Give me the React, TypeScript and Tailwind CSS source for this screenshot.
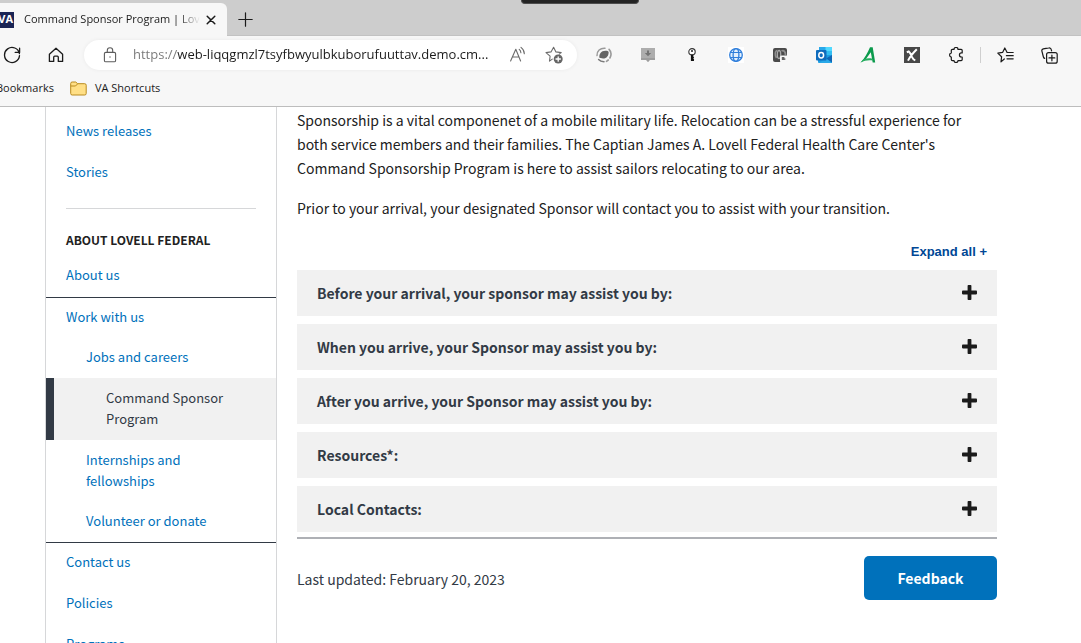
import React, { useState } from "react";

const chromeFont = "font-['Open_Sans','Noto_Sans',sans-serif]";
const line = { fill: "none", stroke: "currentColor", strokeLinecap: "round", strokeLinejoin: "round" } as const;

function IconButton({ label, children }: { label: string; children: React.ReactNode }) {
  return (
    <button type="button" aria-label={label} className="flex h-8 w-11 shrink-0 items-center justify-center text-[#1b1b1b]">
      {children}
    </button>
  );
}

function RefreshIcon() {
  return (
    <svg width="18" height="18" viewBox="0 0 18 18" {...line} strokeWidth="1.3">
      <path d="M16.4 7.6A7.5 7.5 0 1 0 16.5 9.6M16.6 2.2V6.4H12.2" />
    </svg>
  );
}

function HomeIcon() {
  return (
    <svg width="16" height="16" viewBox="0 0 16 16" {...line} strokeWidth="1.3">
      <path d="M1.4 7.2 8 1.2l6.6 6v7.2h-4.3v-4.2a1 1 0 0 0-1-1H6.7a1 1 0 0 0-1 1v4.2H1.4z" />
    </svg>
  );
}

function LockIcon() {
  return (
    <svg width="16" height="16" viewBox="0 0 16 16" {...line} strokeWidth="1.1" className="shrink-0 text-[#5c5c5c]">
      <rect x="2.4" y="5.4" width="11.2" height="9.4" rx="1.4" />
      <path d="M5.3 5.2V3.4a2.7 2.7 0 0 1 5.4 0v1.8" />
      <circle cx="8" cy="10" r=".7" fill="currentColor" stroke="none" />
    </svg>
  );
}

function ReadAloudIcon() {
  return (
    <svg width="18" height="18" viewBox="0 0 18 18" {...line} strokeWidth="1.1">
      <path d="M1.6 15 6.8 3.2 11.6 15M3.4 11h6.6M10.2 3.4c1 .8 1.6 1.9 1.7 3.3M12 1.4c1.9 1.4 3.3 3.3 3.3 6.3" />
    </svg>
  );
}

function AddFavoriteIcon() {
  return (
    <svg width="18" height="18" viewBox="0 0 18 18" {...line} strokeWidth="1.1">
      <path d="M7.3 13.1 4.5 15.1 5.1 10.2 1 6.6 6 5.9 8.6 1.3 10.9 5.9 16.2 6.6 14.3 8.2" />
      <circle cx="13.2" cy="13" r="4.5" fill="#666" stroke="none" />
      <path d="M13.2 10.8v4.4M11 13h4.4" stroke="#fff" strokeWidth="1.3" />
    </svg>
  );
}

const extensions = [
  {
    name: "Swirl",
    icon: (
      <svg width="16" height="16" viewBox="0 0 16 16">
        <path d="M3.4 10.8C2.8 7 5 3.800 9.500 3.700c1.700 0 2.900.5 3.100 1.200.2 3.700-1.900 6.300-5.500 6.700z" fill="#666" />
        <path d="M1 8.600C.8 4 4.200.9 9 1.200" {...line} stroke="#9a9a9a" strokeWidth="1.500" />
        <path d="M2.600 12.600c1.200 1.400 3 2.200 5.400 2.200" {...line} stroke="#7a7a7a" strokeWidth="1.500" />
        <path d="M13.100 2.400c2.300 2.400 2.400 5.600.8 8.600M12.300 13l-1.800 1.300" {...line} stroke="#9a9a9a" strokeWidth="1.600" />
      </svg>
    ),
  },
  {
    name: "Download helper",
    icon: (
      <svg width="16" height="16" viewBox="0 0 16 16">
        <path d="M1 1h14v12h-5.200L8 15l-1.800-2H1z" fill="#adadad" />
        <path d="M7 3.500h2V6h2.200L8 9.300 4.800 6H7z" fill="#737373" />
        <path d="M1 11h14v2h-5.200L8 15l-1.800-2H1z" fill="#9d9d9d" />
      </svg>
    ),
  },
  {
    name: "Password key",
    icon: (
      <svg width="16" height="16" viewBox="0 0 16 16">
        <circle cx="8" cy="4.800" r="3.200" fill="#fff" stroke="#333" strokeWidth="1.100" />
        <circle cx="8" cy="4" r="1" fill="#222" />
        <path d="M6.900 7.500h2.400v2.100l.8.800-.8 1 .8 1-.2 1.600H6.900z" fill="#111" />
      </svg>
    ),
  },
  {
    name: "Web tools",
    icon: (
      <svg width="16" height="16" viewBox="0 0 16 16" fill="none" stroke="#2f7edb" strokeWidth="1.300">
        <path d="M0 0h16v16H0z" fill="#fff" stroke="none" />
        <circle cx="8" cy="8" r="6.300" fill="#e4f0fc" />
        <ellipse cx="8" cy="8" rx="2.900" ry="6.300" />
        <path d="M2.300 5.500h11.400M2.300 10.500h11.400" strokeWidth="1.200" />
      </svg>
    ),
  },
  {
    name: "Recorder",
    icon: (
      <svg width="16" height="16" viewBox="0 0 16 16">
        <rect x="1" y="1" width="14" height="14" rx="2" fill="#4a4a4a" />
        <path d="M5.500 3.500C3 3.800 2.500 8 4.500 11" fill="none" stroke="#8e8e8e" strokeWidth="1.600" />
        <ellipse cx="7" cy="7.500" rx="1.700" ry="4" fill="none" stroke="#a8a8a8" strokeWidth="1.300" />
        <path d="M9.500 4c2.500-1.200 4 1 4 4" fill="none" stroke="#8e8e8e" strokeWidth="1.800" />
        <path d="M9.500 8.500h5.500l.5 3v3l-1.500 1H9.500a1.500 1.500 0 0 1-1.500-1.500v-4a1.500 1.500 0 0 1 1.500-1.500z" fill="#f7f7f7" />
        <path d="M9.800 10h2.600v1.200l1.600.7-1.600 1.100H9.800z" fill="#626262" />
      </svg>
    ),
  },
  {
    name: "Outlook",
    icon: (
      <svg width="16" height="16" viewBox="0 0 16 16">
        <path d="M3 0h13v8H3z" fill="#28a8ea" />
        <path d="M9.500 0H16v4H9.500z" fill="#50d9ff" />
        <path d="M9.500 4H16v4H9.500z" fill="#32bdf2" />
        <path d="M2 8h14v8H3a1 1 0 0 1-1-1z" fill="#1b9de2" />
        <path d="M16 8v7.500L10 11.500z" fill="#1066b5" />
        <path d="M3 16h13l-6-4.500z" fill="#2aa9e8" />
        <rect x="0" y="3" width="10.500" height="10.500" rx="1" fill="#0f6cbd" />
        <ellipse cx="5.200" cy="8.200" rx="2.400" ry="2.700" fill="none" stroke="#fff" strokeWidth="1.500" />
      </svg>
    ),
  },
  {
    name: "Accessibility checker",
    icon: (
      <svg width="16" height="16" viewBox="0 0 16 16">
        <path d="M10 .3h2.700L15.200 15.600h-2.500L10.800 5.200 5.200 13 .6 15.600C4.600 11.300 7.500 6.200 10 .3z" fill="#0b9a4c" />
        <path d="M.6 15.600 3.400 12.200c3-1 6.300-1.300 9-.5l.4 1.900C8.500 12.800 4.600 13.600.6 15.600z" fill="#25ad5f" />
      </svg>
    ),
  },
  {
    name: "XPath inspector",
    icon: (
      <svg width="16" height="16" viewBox="0 0 16 16">
        <path d="M0 0h16v16H0z" fill="#484848" />
        <path d="M2.800 5.200 4.800 4.500c1.700 1.400 2.400 3.500 3.100 5.400.8 1.800 1.600 2.900 3.400 3.500M12.800 2.200C9 6 6.200 9.200 4 13.600" fill="none" stroke="#fff" strokeWidth="2" />
      </svg>
    ),
  },
  {
    name: "Extensions",
    icon: (
      <svg width="16" height="16" viewBox="0 0 16 16" {...line} strokeWidth="1.200">
        <path d="M6 2.400a2 2 0 0 1 4 0h3.200a1 1 0 0 1 1 1v2.500h-.7a2 2 0 0 0 0 4.100h.7v2.600a1 1 0 0 1-1 1H10a2 2 0 0 1-4 0H4.300a1 1 0 0 1-1-1V10.200a2.200 2.200 0 0 1 0-4.300V3.400a1 1 0 0 1 1-1z" />
      </svg>
    ),
  },
];

function FavoritesIcon() {
  return (
    <svg width="17" height="16" viewBox="0 0 17 16" {...line} strokeWidth="1.200">
      <path d="M7.300 12 4 14.900 4.600 9.800.8 6.100 5.600 5.400 7.800 1 10 5.300M10 5.500h6.200M9.400 8.700h6.800M10 11.800h6.200" />
    </svg>
  );
}

function CollectionsIcon() {
  return (
    <svg width="17" height="17" viewBox="0 0 17 17" {...line} strokeWidth="1.200">
      <path d="M3.700 11.400A2 2 0 0 1 2.400 10L.9 4.200a2 2 0 0 1 1.400-2.400L7.800.9a2 2 0 0 1 2.400 1.500l.4 1.500" />
      <rect x="5.600" y="5.600" width="10.600" height="10.600" rx="2" />
      <path d="M10.900 8v5.800M8 10.900h5.800" />
    </svg>
  );
}

function FolderIcon() {
  return (
    <svg width="17" height="15" viewBox="0 0 17 15" stroke="#b98a1e" strokeWidth="1">
      <path d="M.7 2.500A1.500 1.500 0 0 1 2.200 1h3.500l2 1.700h7a1.500 1.500 0 0 1 1.500 1.500v8.300a1.500 1.500 0 0 1-1.500 1.500H2.200a1.500 1.500 0 0 1-1.500-1.500z" fill="#ffdf86" />
      <path d="M.8 5h4.700l2.200-2.200" fill="none" />
    </svg>
  );
}

function BrowserBar() {
  return (
    <header className={`shrink-0 overflow-hidden border-b border-[#bdbdbd] bg-[#f7f7f7] text-[#1b1b1b] ${chromeFont}`}>
      <div className="relative flex h-9 items-end border-b border-[#c2c2c2] bg-[#cdcdcd]">
        <div className="-mb-px flex h-[33px] w-[227px] items-center rounded-tr-md bg-[#f7f7f7]">
          <span className="-ml-1 flex h-4 w-[18px] shrink-0 items-center justify-end bg-[#1a2454] pr-px text-[11px] font-bold text-white">VA</span>
          <span className="ml-2.5 w-[176px] bg-linear-to-r from-[#1b1b1b] from-[155px] to-transparent bg-clip-text text-[11px] whitespace-nowrap text-transparent">
            Command Sponsor Program | Lov
          </span>
          <button type="button" aria-label="Close tab" className="ml-1.5 shrink-0">
            <svg width="10" height="10" viewBox="0 0 10 10" {...line} strokeWidth="1.500">
              <path d="m1.200 1.200 7.600 7.600M8.800 1.200 1.200 8.800" />
            </svg>
          </button>
        </div>
        <button type="button" aria-label="New tab" className="flex h-8 w-9 items-center justify-center">
          <svg width="15" height="15" viewBox="0 0 15 15" {...line} strokeWidth="1.200">
            <path d="M7.500.8v13.400M.8 7.500h13.400" />
          </svg>
        </button>
        <div className="absolute top-0 left-[521px] h-1 w-[118px] rounded-b-sm border-x border-b border-[#4c4c4c] bg-[#242424]" />
      </div>

      <div className="-ml-2.5 flex h-[38px] items-center pr-2.5">
        <IconButton label="Refresh"><RefreshIcon /></IconButton>
        <IconButton label="Home"><HomeIcon /></IconButton>
        <div className="mr-[5px] ml-1.5 flex h-[30px] min-w-0 flex-1 items-center rounded-full bg-white pr-3.5 pl-[18px] shadow-[0_0_4px_rgba(0,0,0,0.06)]">
          <LockIcon />
          <input
            aria-label="Address"
            readOnly
            value="https://web-liqqgmzl7tsyfbwyulbkuborufuuttav.demo.cm..."
            className="ml-[15px] min-w-0 flex-1 bg-linear-to-r from-[#767676] from-[44px] to-[#1b1b1b] to-[44px] bg-clip-text text-[13px] text-transparent outline-none"
          />
          <div className="flex gap-[18px] text-[#6b6b6b]">
            <button type="button" aria-label="Read aloud"><ReadAloudIcon /></button>
            <button type="button" aria-label="Add to favorites"><AddFavoriteIcon /></button>
          </div>
        </div>
        {extensions.map((e) => (
          <IconButton key={e.name} label={e.name}>{e.icon}</IconButton>
        ))}
        <div className="mx-0.5 h-4 w-px bg-[#cfcfcf]" />
        <IconButton label="Favorites"><FavoritesIcon /></IconButton>
        <IconButton label="Collections"><CollectionsIcon /></IconButton>
      </div>

      <div className="-ml-1 flex h-8 items-center pb-1 text-[11px]">
        <a href="#bookmarks">Bookmarks</a>
        <a href="#shortcuts" className="ml-4 flex items-center gap-2">
          <FolderIcon />
          VA Shortcuts
        </a>
      </div>
    </header>
  );
}

function NavLink({ label, level = 0 }: { label: string; level?: 0 | 1 }) {
  return (
    <a href="#page" className={`block pt-[9px] pr-5 pb-[11px] leading-5 text-[#0071bb] ${level === 1 ? "pl-10" : "pl-5"}`}>
      {label}
    </a>
  );
}

function SideNav() {
  return (
    <nav aria-label="Lovell Federal" className="w-[232px] shrink-0 border-x border-[#d6d7d9] pt-[5px] text-[13px]">
      <div className="flex flex-col gap-px">
        <NavLink label="News releases" />
        <NavLink label="Stories" />
      </div>
      <hr className="mx-5 mt-[15px] border-[#d6d7d9]" />
      <h2 className="mt-[21px] mb-1.5 px-5 text-xs leading-5 font-bold text-[#212121]">ABOUT LOVELL FEDERAL</h2>
      <NavLink label="About us" />
      <div className="mt-px border-y border-[#323a45]">
        <NavLink label="Work with us" />
        <NavLink label="Jobs and careers" level={1} />
        <a href="#page" aria-current="page" className="block border-l-8 border-[#323a45] bg-[#f1f1f1] pt-[9px] pr-12 pb-[11px] pl-[52px] leading-[21px] text-[#323a45]">
          Command Sponsor Program
        </a>
        <a href="#page" className="block pt-[9px] pr-16 pb-[11px] pl-10 leading-[21px] text-[#0071bb]">
          Internships and fellowships
        </a>
        <NavLink label="Volunteer or donate" level={1} />
      </div>
      <div className="flex flex-col gap-px">
        <NavLink label="Contact us" />
        <NavLink label="Policies" />
        <NavLink label="Programs" />
      </div>
    </nav>
  );
}

const sections = [
  "Before your arrival, your sponsor may assist you by:",
  "When you arrive, your Sponsor may assist you by:",
  "After you arrive, your Sponsor may assist you by:",
  "Resources*:",
  "Local Contacts:",
];

function Accordion() {
  const [open, setOpen] = useState<number | null>(null);
  return (
    <div className="flex flex-col gap-2">
      {sections.map((title, i) => (
        <h3 key={title}>
          <button
            type="button"
            aria-expanded={open === i}
            onClick={() => setOpen(open === i ? null : i)}
            className="flex h-[46px] w-full items-center justify-between bg-[#f1f1f1] px-5 text-left font-bold text-[#323a45]"
          >
            {title}
            <svg width="15" height="15" viewBox="0 0 15 15" fill="#1b1b1b" aria-hidden="true" className="mb-0.5">
              <rect x="0" y="5.600" width="15" height="3.800" rx=".8" />
              {open !== i && <rect x="5.600" y="0" width="3.800" height="15" rx=".8" />}
            </svg>
          </button>
        </h3>
      ))}
    </div>
  );
}

export default function App() {
  return (
    <div className="flex h-screen flex-col overflow-hidden bg-white">
      <BrowserBar />
      <div className="flex min-h-0 flex-1 overflow-hidden pr-[84px] pl-[45px] font-['Noto_Sans_CJK_SC',sans-serif]">
        <SideNav />
        <main className="ml-5 min-w-0 flex-1 pt-px text-sm leading-6 text-[#212121]">
          <p className="mb-4 pr-6">
            Sponsorship is a vital componenet of a mobile military life. Relocation can be a stressful experience for both service members
            and their families. The Captian James A. Lovell Federal Health Care Center's Command Sponsorship Program is here to assist
            sailors relocating to our area.
          </p>
          <p>Prior to your arrival, your designated Sponsor will contact you to assist with your transition.</p>
          <div className="flex justify-end pt-5 pr-2.5 pb-1.5">
            <button type="button" className="font-['Liberation_Sans',sans-serif] text-[13px] leading-6 font-bold text-[#004795]">
              Expand all +
            </button>
          </div>
          <Accordion />
          <div className="mt-[5px] flex items-center justify-between border-t-2 border-[#aeb0b5] pt-[17px]">
            <p className="pt-0.5 text-[#323a45]">Last updated: February 20, 2023</p>
            <button type="button" className="h-11 w-[133px] rounded-[5px] bg-[#0071bb] font-bold text-white">
              Feedback
            </button>
          </div>
        </main>
      </div>
    </div>
  );
}
